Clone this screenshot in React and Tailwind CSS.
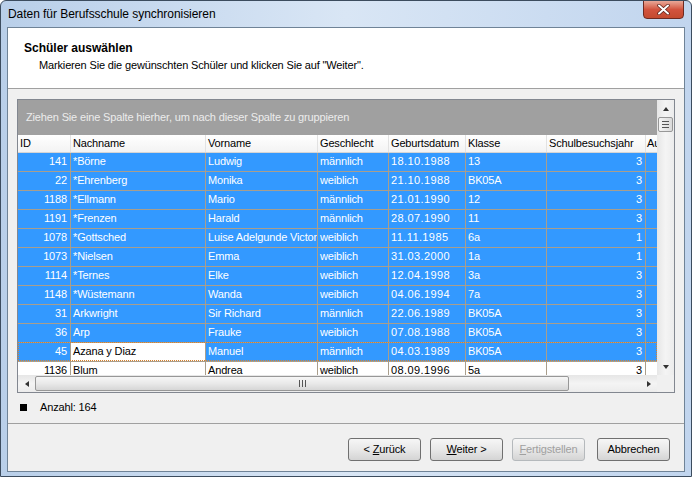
import React from "react";

const rows = [
  ["141", "*Börne", "Ludwig", "männlich", "18.10.1988", "13", "3"],
  ["22", "*Ehrenberg", "Monika", "weiblich", "21.10.1988", "BK05A", "3"],
  ["1188", "*Ellmann", "Mario", "männlich", "21.01.1990", "12", "3"],
  ["1191", "*Frenzen", "Harald", "männlich", "28.07.1990", "11", "3"],
  ["1078", "*Gottsched", "Luise Adelgunde Victor", "weiblich", "11.11.1985", "6a", "1"],
  ["1073", "*Nielsen", "Emma", "weiblich", "31.03.2000", "1a", "1"],
  ["1114", "*Ternes", "Elke", "weiblich", "12.04.1998", "3a", "3"],
  ["1148", "*Wüstemann", "Wanda", "weiblich", "04.06.1994", "7a", "3"],
  ["31", "Arkwright", "Sir Richard", "männlich", "22.06.1989", "BK05A", "3"],
  ["36", "Arp", "Frauke", "weiblich", "07.08.1988", "BK05A", "3"],
  ["45", "Azana y Diaz", "Manuel", "männlich", "04.03.1989", "BK05A", "3"],
  ["1136", "Blum", "Andrea", "weiblich", "08.09.1996", "5a", "3"],
];

// column widths incl. right grid line
const widths = ["w-[53px]", "w-[135px]", "w-[112px]", "w-[71px]", "w-[77px]", "w-[81px]", "w-[99px]"];
const heads = ["ID", "Nachname", "Vorname", "Geschlecht", "Geburtsdatum", "Klasse", "Schulbesuchsjahr"];
const alignRight = [true, false, false, false, false, false, true];

const Row = ({ r, idx }) => {
  const selected = idx < 11;
  const focused = idx === 10;
  return (
    <div
      className={`relative flex h-[19px] shrink-0 border-b border-[#a99e8c] ${
        selected ? "bg-[#3399ff] text-white" : "bg-white text-black"
      }`}
    >
      {r.map((v, i) => (
        <div
          key={i}
          className={`${widths[i]} shrink-0 h-full border-r border-[#a99e8c] px-[2px] leading-[16px] whitespace-nowrap overflow-hidden ${
            alignRight[i] ? "text-right pr-[3px]" : ""
          } ${i === 4 ? "tracking-[0.4px]" : ""} ${focused && i === 1 ? "bg-white text-black" : ""}`}
        >
          {v}
        </div>
      ))}
      <div className="w-[20px] shrink-0 h-full" />
      {focused && (
        <div className="absolute inset-0 -top-[1px] border border-dotted border-[#d9822b] pointer-events-none" />
      )}
    </div>
  );
};

const Btn = ({ children, disabled }) => (
  <button
    className={`w-[73px] h-[23px] rounded-[3px] border text-[11px] leading-none bg-gradient-to-b from-[#f6f6f6] via-[#e8e8e8] to-[#d4d4d4] ${
      disabled ? "border-[#b5b9bc] text-[#a0a0a0]" : "border-[#707070] text-black"
    }`}
  >
    {children}
  </button>
);

export default function App() {
  return (
    <div
      className="w-[692px] h-[477px] relative overflow-hidden border border-[#3c4c5e] rounded-t-[6px] bg-gradient-to-r from-[#b9cfe9] via-[#d9e6f5] to-[#c1d5ee] text-black"
      style={{ fontFamily: '"Liberation Sans", Arial, sans-serif' }}
    >
      {/* title bar */}
      <div className="h-[26px] flex items-center pl-[7px]">
        <span className="text-[12px] tracking-[-0.05px]">Daten für Berufsschule synchronisieren</span>
      </div>
      <div className="absolute top-[-1px] right-[7px] w-[41px] h-[19px] rounded-b-[4px] border border-[#6d2a22] bg-gradient-to-b from-[#e8a898] via-[#d2533e] to-[#c44a2f] flex items-center justify-center">
        <svg width="13" height="11" viewBox="0 0 13 11">
          <path d="M2 1.5 L11 9.5 M11 1.5 L2 9.5" stroke="#5a2018" strokeWidth="3.4" strokeLinecap="round" />
          <path d="M2 1.5 L11 9.5 M11 1.5 L2 9.5" stroke="#fff" strokeWidth="2" strokeLinecap="round" />
        </svg>
      </div>

      {/* content */}
      <div className="mx-[6px] h-[445px] border border-[#6f8397] bg-[#f0f0f0] flex flex-col text-[11px] tracking-[-0.15px]">
        {/* header */}
        <div className="h-[61px] shrink-0 bg-white border-b border-[#a0a0a0] pl-[16px] pt-[12px]">
          <div className="text-[12px] font-bold leading-[16px] tracking-normal">Schüler auswählen</div>
          <div className="pl-[15px] mt-[2px] leading-[14px]">
            Markieren Sie die gewünschten Schüler und klicken Sie auf "Weiter".
          </div>
        </div>

        {/* body */}
        <div className="h-[334px] shrink-0 pt-[10px] pl-[9px] pr-[9px]">
          <div className="h-[294px] border border-[#828790] bg-white flex flex-col">
            <div className="flex flex-1 min-h-0">
              <div className="flex-1 min-w-0 flex flex-col overflow-hidden">
                <div className="h-[35px] shrink-0 bg-[#a0a0a0] text-[#ececec] pl-[8px] flex items-center">
                  Ziehen Sie eine Spalte hierher, um nach dieser Spalte zu gruppieren
                </div>
                <div className="h-[18px] shrink-0 flex bg-gradient-to-b from-white to-[#f3f3f3] border-b border-[#d5d5d5]">
                  {heads.map((h, i) => (
                    <div
                      key={h}
                      className={`${widths[i]} shrink-0 border-r border-[#e2e2e2] px-[2px] leading-[17px] whitespace-nowrap overflow-hidden`}
                    >
                      {h}
                    </div>
                  ))}
                  <div className="w-[20px] shrink-0 px-[1px] leading-[17px] whitespace-nowrap">Au</div>
                </div>
                {rows.map((r, i) => (
                  <Row key={r[0]} r={r} idx={i} />
                ))}
              </div>
              {/* vertical scrollbar */}
              <div className="w-[17px] shrink-0 bg-gradient-to-r from-[#e6e6e6] via-[#f4f4f4] to-[#ececec] flex flex-col items-center">
                <div className="h-[17px] w-full flex items-center justify-center">
                  <div className="w-0 h-0 border-l-[3.5px] border-r-[3.5px] border-b-[4px] border-l-transparent border-r-transparent border-b-[#333]" />
                </div>
                <div className="w-[15px] h-[15px] rounded-[2px] border border-[#979797] bg-gradient-to-r from-[#f4f4f4] to-[#dadada] flex flex-col items-center justify-center gap-[2px]">
                  <div className="w-[7px] h-px bg-[#555]" />
                  <div className="w-[7px] h-px bg-[#555]" />
                  <div className="w-[7px] h-px bg-[#555]" />
                </div>
                <div className="flex-1" />
                <div className="h-[17px] w-full flex items-center justify-center">
                  <div className="w-0 h-0 border-l-[3.5px] border-r-[3.5px] border-t-[4px] border-l-transparent border-r-transparent border-t-[#333]" />
                </div>
              </div>
            </div>
            {/* horizontal scrollbar */}
            <div className="h-[17px] shrink-0 flex">
              <div className="flex-1 bg-gradient-to-b from-[#e6e6e6] via-[#f4f4f4] to-[#ececec] flex items-center">
                <div className="w-[17px] h-full flex items-center justify-center">
                  <div className="w-0 h-0 border-t-[3.5px] border-b-[3.5px] border-r-[4px] border-t-transparent border-b-transparent border-r-[#333]" />
                </div>
                <div className="w-[534px] h-[15px] rounded-[2px] border border-[#979797] bg-gradient-to-b from-[#f6f6f6] via-[#e9e9e9] to-[#d6d6d6] flex items-center justify-center gap-[2px]">
                  <div className="w-px h-[7px] bg-[#555]" />
                  <div className="w-px h-[7px] bg-[#555]" />
                  <div className="w-px h-[7px] bg-[#555]" />
                </div>
                <div className="flex-1" />
                <div className="w-[17px] h-full flex items-center justify-center">
                  <div className="w-0 h-0 border-t-[3.5px] border-b-[3.5px] border-l-[4px] border-t-transparent border-b-transparent border-l-[#333]" />
                </div>
              </div>
              <div className="w-[17px] bg-[#f0f0f0]" />
            </div>
          </div>
          <div className="flex items-center mt-[8px] pl-[3px] h-[12px]">
            <div className="w-[7px] h-[7px] bg-black" />
            <span className="ml-[13px]">Anzahl: 164</span>
          </div>
        </div>

        {/* footer */}
        <div className="flex-1 border-t border-[#a0a0a0] flex items-start justify-end pt-[14px] pr-[14px]">
          <div className="flex gap-[9px]">
            <Btn>
              &lt; <span className="underline">Z</span>urück
            </Btn>
            <Btn>
              <span className="underline">W</span>eiter &gt;
            </Btn>
            <Btn disabled>
              <span className="underline">F</span>ertigstellen
            </Btn>
          </div>
          <div className="ml-[12px]">
            <Btn>Abbrechen</Btn>
          </div>
        </div>
      </div>
    </div>
  );
}
